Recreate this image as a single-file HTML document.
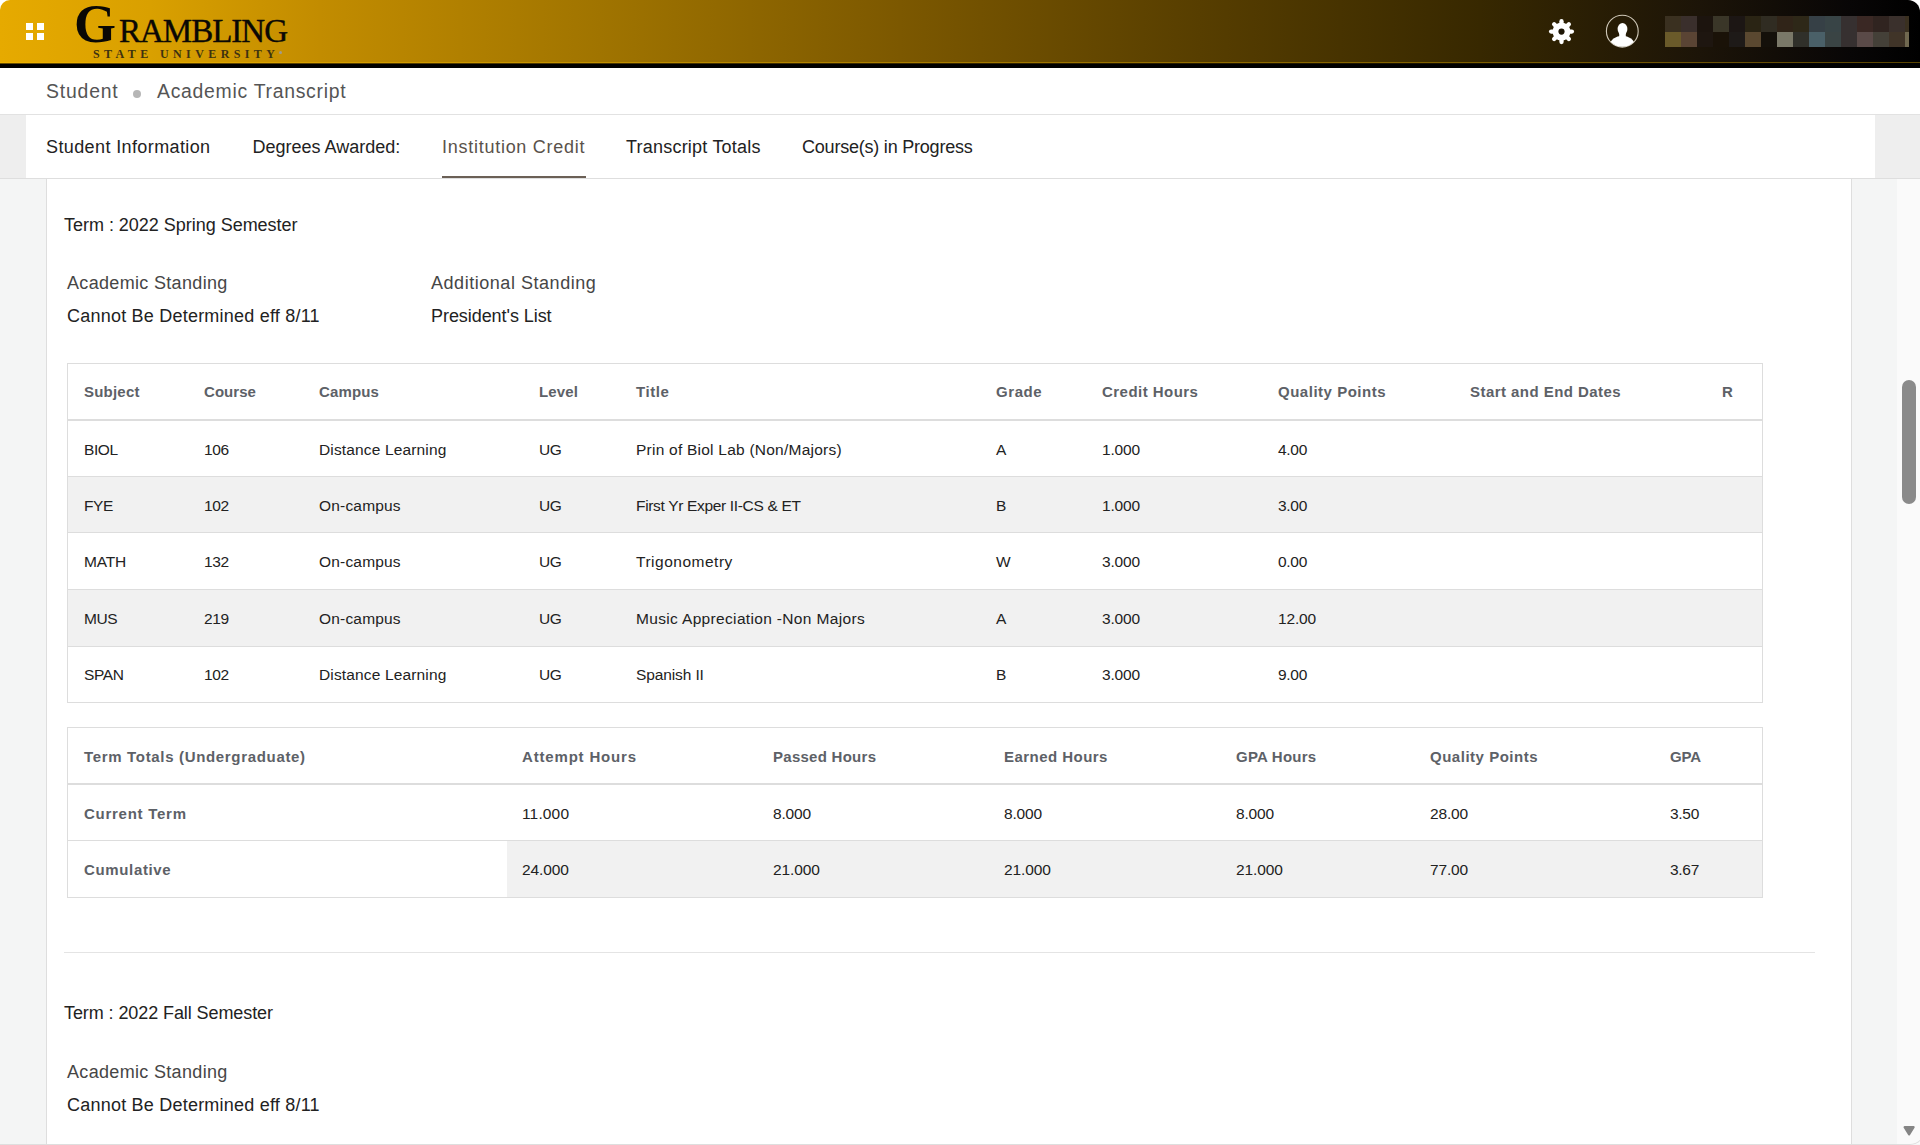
<!DOCTYPE html>
<html><head><meta charset="utf-8">
<style>
*{margin:0;padding:0;box-sizing:border-box}
html,body{width:1920px;height:1145px;overflow:hidden;background:#f4f5f5;font-family:"Liberation Sans",sans-serif}
.a{position:absolute}
.t{position:absolute;white-space:nowrap;line-height:1}
#hdr{left:0;top:0;width:1920px;height:68px;border-radius:10px 12px 0 0;overflow:hidden;
 background:linear-gradient(to right,#e6aa00 0px,#d9a000 150px,#c28c00 320px,#a07400 600px,#7c5800 900px,#573e00 1200px,#372800 1480px,#1c1408 1700px,#080606 1850px,#000 1920px)}
.hl{position:absolute;height:1px;background:#dddddd}
.vl{position:absolute;width:1px;background:#dddddd}
</style></head><body>
<div class="a" style="left:0;top:0;width:1920px;height:20px;background:#fff"></div>
<div id="hdr" class="a"></div>
<div class="a" style="left:0;top:62px;width:1920px;height:1px;background:rgba(255,196,0,0.35)"></div>
<div class="a" style="left:0;top:63px;width:1920px;height:1px;background:rgba(0,0,0,0.55)"></div>
<div class="a" style="left:0;top:64px;width:1920px;height:4px;background:#000"></div>
<div class="a" style="left:26px;top:23px;width:7px;height:7px;background:#fff"></div>
<div class="a" style="left:37px;top:23px;width:7px;height:7px;background:#fff"></div>
<div class="a" style="left:26px;top:33px;width:7px;height:7px;background:#fff"></div>
<div class="a" style="left:37px;top:33px;width:7px;height:7px;background:#fff"></div>
<div class="t" style="left:74px;top:-3px;font-family:'Liberation Serif',serif;font-weight:bold;font-size:54px;line-height:54px;color:#0a0805">G</div>
<div class="t" style="left:119px;top:15px;font-family:'Liberation Serif',serif;font-size:33px;line-height:33px;letter-spacing:-1px;-webkit-text-stroke:0.4px #0a0805;color:#0a0805">RAMBLING</div>
<div class="t" style="left:93px;top:48px;font-family:'Liberation Serif',serif;font-weight:bold;font-size:12px;line-height:12px;letter-spacing:4.4px;color:#3e3210">STATE UNIVERSITY</div>
<div class="a" style="left:278.5px;top:50.5px;width:3.2px;height:3.2px;border-radius:50%;background:#a09c8c"></div>
<svg class="a" style="left:1547px;top:17px" width="29" height="29" viewBox="-14.5 -14.5 29 29">
<g transform="translate(0,0.1)">
<circle r="9" fill="#fff"/>
<g stroke="#fff" stroke-width="4.3" stroke-linecap="round">
<line x1="0" y1="-6" x2="0" y2="-10.4" transform="rotate(0)"/>
<line x1="0" y1="-6" x2="0" y2="-10.4" transform="rotate(45)"/>
<line x1="0" y1="-6" x2="0" y2="-10.4" transform="rotate(90)"/>
<line x1="0" y1="-6" x2="0" y2="-10.4" transform="rotate(135)"/>
<line x1="0" y1="-6" x2="0" y2="-10.4" transform="rotate(180)"/>
<line x1="0" y1="-6" x2="0" y2="-10.4" transform="rotate(225)"/>
<line x1="0" y1="-6" x2="0" y2="-10.4" transform="rotate(270)"/>
<line x1="0" y1="-6" x2="0" y2="-10.4" transform="rotate(315)"/>
</g><circle r="3.1" fill="#1e1606"/></g></svg>
<svg class="a" style="left:1604px;top:13px" width="36" height="36" viewBox="0 0 36 36">
<defs><clipPath id="cc"><circle cx="18.3" cy="18.2" r="15.6"/></clipPath></defs>
<circle cx="18.3" cy="18.2" r="15.9" fill="none" stroke="#cfc8b8" stroke-width="1.1"/>
<g clip-path="url(#cc)" fill="#fff">
<ellipse cx="18.5" cy="16.1" rx="4.9" ry="6.2"/>
<rect x="15.2" y="20" width="6.6" height="4.5"/>
<ellipse cx="18.3" cy="32" rx="12.3" ry="9.2"/>
</g></svg>
<div class="a" style="left:1665px;top:16px;width:16px;height:16px;background:#3a3020"></div>
<div class="a" style="left:1665px;top:32px;width:16px;height:15px;background:#6a5a2a"></div>
<div class="a" style="left:1681px;top:16px;width:16px;height:16px;background:#3a2f2c"></div>
<div class="a" style="left:1681px;top:32px;width:16px;height:15px;background:#5a4434"></div>
<div class="a" style="left:1697px;top:16px;width:16px;height:16px;background:#1c140e"></div>
<div class="a" style="left:1697px;top:32px;width:16px;height:15px;background:#1e1610"></div>
<div class="a" style="left:1713px;top:16px;width:16px;height:16px;background:#3a3628"></div>
<div class="a" style="left:1713px;top:32px;width:16px;height:15px;background:#1a1208"></div>
<div class="a" style="left:1729px;top:16px;width:16px;height:16px;background:#1c1614"></div>
<div class="a" style="left:1729px;top:32px;width:16px;height:15px;background:#1e1a18"></div>
<div class="a" style="left:1745px;top:16px;width:16px;height:16px;background:#2a2414"></div>
<div class="a" style="left:1745px;top:32px;width:16px;height:15px;background:#5a4830"></div>
<div class="a" style="left:1761px;top:16px;width:16px;height:16px;background:#302c22"></div>
<div class="a" style="left:1761px;top:32px;width:16px;height:15px;background:#14100a"></div>
<div class="a" style="left:1777px;top:16px;width:16px;height:16px;background:#302418"></div>
<div class="a" style="left:1777px;top:32px;width:16px;height:15px;background:#7a7868"></div>
<div class="a" style="left:1793px;top:16px;width:16px;height:16px;background:#2e2818"></div>
<div class="a" style="left:1793px;top:32px;width:16px;height:15px;background:#30302a"></div>
<div class="a" style="left:1809px;top:16px;width:16px;height:16px;background:#364046"></div>
<div class="a" style="left:1809px;top:32px;width:16px;height:15px;background:#4a6068"></div>
<div class="a" style="left:1825px;top:16px;width:16px;height:16px;background:#384446"></div>
<div class="a" style="left:1825px;top:32px;width:16px;height:15px;background:#3a4444"></div>
<div class="a" style="left:1841px;top:16px;width:16px;height:16px;background:#363030"></div>
<div class="a" style="left:1841px;top:32px;width:16px;height:15px;background:#363030"></div>
<div class="a" style="left:1857px;top:16px;width:16px;height:16px;background:#3a2824"></div>
<div class="a" style="left:1857px;top:32px;width:16px;height:15px;background:#5a4a48"></div>
<div class="a" style="left:1873px;top:16px;width:16px;height:16px;background:#302420"></div>
<div class="a" style="left:1873px;top:32px;width:16px;height:15px;background:#444038"></div>
<div class="a" style="left:1889px;top:16px;width:16px;height:16px;background:#3a302c"></div>
<div class="a" style="left:1889px;top:32px;width:16px;height:15px;background:#403428"></div>
<div class="a" style="left:1905px;top:16px;width:4px;height:16px;background:#3a3020"></div>
<div class="a" style="left:1905px;top:32px;width:4px;height:15px;background:#706850"></div>
<div class="a" style="left:0;top:68px;width:1920px;height:46px;background:#fff"></div>
<div class="hl" style="left:0;top:114px;width:1920px;background:#e2e2e2"></div>
<div class="t" style="left:46px;top:82.08px;font-size:19.4px;color:#555;letter-spacing:0.815px;">Student</div>
<div class="a" style="left:133.2px;top:89.6px;width:8.3px;height:8.3px;border-radius:50%;background:#b6b6b6"></div>
<div class="t" style="left:157px;top:82.08px;font-size:19.4px;color:#555;letter-spacing:0.717px;">Academic Transcript</div>
<div class="a" style="left:0;top:115px;width:1920px;height:63px;background:#eeeeee"></div>
<div class="a" style="left:26px;top:115px;width:1849px;height:63px;background:#fff"></div>
<div class="hl" style="left:0;top:178px;width:1920px;background:#dedede"></div>
<div class="a" style="left:442px;top:176px;width:144px;height:2px;background:#6b6056"></div>
<div class="t" style="left:46px;top:138.26px;font-size:18px;color:#222;letter-spacing:0.39px;">Student Information</div>
<div class="t" style="left:252.5px;top:138.26px;font-size:18px;color:#222;letter-spacing:0.007px;">Degrees Awarded:</div>
<div class="t" style="left:442px;top:138.26px;font-size:18px;color:#5a524a;letter-spacing:0.734px;">Institution Credit</div>
<div class="t" style="left:626px;top:138.26px;font-size:18px;color:#222;letter-spacing:0.214px;">Transcript Totals</div>
<div class="t" style="left:802px;top:138.26px;font-size:18px;color:#222;letter-spacing:-0.214px;">Course(s) in Progress</div>
<div class="a" style="left:46px;top:179px;width:1806px;height:966px;background:#fff;border-left:1px solid #dedede;border-right:1px solid #dedede"></div>
<div class="hl" style="left:0;top:1144px;width:1906px;background:#dedede"></div>
<div class="a" style="left:1897px;top:179px;width:23px;height:965px;background:#fafafa"></div>
<div class="a" style="left:1902px;top:380px;width:14px;height:124px;background:#8a8a8a;border-radius:7px"></div>
<svg class="a" style="left:1902px;top:1125px" width="14" height="12" viewBox="0 0 14 12"><path d="M2.6 2.2 H11.6 L7.1 9.4 Z" fill="#858585" stroke="#858585" stroke-width="2.2" stroke-linejoin="round"/></svg>
<div class="a" style="left:1880px;top:1115px;width:45px;height:30px;border-bottom:1px solid #dddddd;border-right:1px solid #dddddd;border-bottom-right-radius:15px"></div>
<div class="t" style="left:64px;top:215.76px;font-size:18px;color:#222;letter-spacing:-0.022px;">Term : 2022 Spring Semester</div>
<div class="t" style="left:67px;top:274.26px;font-size:18px;color:#464646;letter-spacing:0.326px;">Academic Standing</div>
<div class="t" style="left:67px;top:307.36px;font-size:18px;color:#222;letter-spacing:0.219px;">Cannot Be Determined eff 8/11</div>
<div class="t" style="left:431px;top:274.26px;font-size:18px;color:#464646;letter-spacing:0.538px;">Additional Standing</div>
<div class="t" style="left:431px;top:307.36px;font-size:18px;color:#222;letter-spacing:-0.059px;">President's List</div>
<div class="a" style="left:67px;top:363px;width:1696px;height:340px;border:1px solid #dddddd;background:#fff"></div>
<div class="a" style="left:68px;top:477px;width:1694px;height:55px;background:#f1f1f1"></div>
<div class="a" style="left:68px;top:590px;width:1694px;height:56px;background:#f1f1f1"></div>
<div class="hl" style="left:67px;top:419px;width:1696px;height:2px;background:#dddddd"></div>
<div class="hl" style="left:67px;top:476px;width:1696px;background:#dddddd"></div>
<div class="hl" style="left:67px;top:532px;width:1696px;background:#dddddd"></div>
<div class="hl" style="left:67px;top:589px;width:1696px;background:#dddddd"></div>
<div class="hl" style="left:67px;top:646px;width:1696px;background:#dddddd"></div>
<div class="t" style="left:84px;top:384.30px;font-size:15px;color:#5d6167;font-weight:bold;letter-spacing:0.208px;">Subject</div>
<div class="t" style="left:204px;top:384.30px;font-size:15px;color:#5d6167;font-weight:bold;letter-spacing:0.05px;">Course</div>
<div class="t" style="left:319px;top:384.30px;font-size:15px;color:#5d6167;font-weight:bold;letter-spacing:0.15px;">Campus</div>
<div class="t" style="left:539px;top:384.30px;font-size:15px;color:#5d6167;font-weight:bold;letter-spacing:0.15px;">Level</div>
<div class="t" style="left:636px;top:384.30px;font-size:15px;color:#5d6167;font-weight:bold;letter-spacing:0.6px;">Title</div>
<div class="t" style="left:996px;top:384.30px;font-size:15px;color:#5d6167;font-weight:bold;letter-spacing:0.562px;">Grade</div>
<div class="t" style="left:1102px;top:384.30px;font-size:15px;color:#5d6167;font-weight:bold;letter-spacing:0.464px;">Credit Hours</div>
<div class="t" style="left:1278px;top:384.30px;font-size:15px;color:#5d6167;font-weight:bold;letter-spacing:0.515px;">Quality Points</div>
<div class="t" style="left:1470px;top:384.30px;font-size:15px;color:#5d6167;font-weight:bold;letter-spacing:0.45px;">Start and End Dates</div>
<div class="t" style="left:1722px;top:384.30px;font-size:15px;color:#5d6167;font-weight:bold;">R</div>
<div class="t" style="left:84px;top:441.58px;font-size:15.5px;color:#222;letter-spacing:-0.4px;">BIOL</div>
<div class="t" style="left:204px;top:441.58px;font-size:15.5px;color:#222;letter-spacing:-0.345px;">106</div>
<div class="t" style="left:319px;top:441.58px;font-size:15.5px;color:#222;letter-spacing:0.146px;">Distance Learning</div>
<div class="t" style="left:539px;top:441.58px;font-size:15.5px;color:#222;letter-spacing:-0.4px;">UG</div>
<div class="t" style="left:636px;top:441.58px;font-size:15.5px;color:#222;letter-spacing:0.236px;">Prin of Biol Lab (Non/Majors)</div>
<div class="t" style="left:996px;top:441.58px;font-size:15.5px;color:#222;">A</div>
<div class="t" style="left:1102px;top:441.58px;font-size:15.5px;color:#222;letter-spacing:-0.155px;">1.000</div>
<div class="t" style="left:1278px;top:441.58px;font-size:15.5px;color:#222;letter-spacing:-0.301px;">4.00</div>
<div class="t" style="left:84px;top:497.98px;font-size:15.5px;color:#222;letter-spacing:-0.4px;">FYE</div>
<div class="t" style="left:204px;top:497.98px;font-size:15.5px;color:#222;letter-spacing:-0.345px;">102</div>
<div class="t" style="left:319px;top:497.98px;font-size:15.5px;color:#222;letter-spacing:0.184px;">On-campus</div>
<div class="t" style="left:539px;top:497.98px;font-size:15.5px;color:#222;letter-spacing:-0.4px;">UG</div>
<div class="t" style="left:636px;top:497.98px;font-size:15.5px;color:#222;letter-spacing:-0.329px;">First Yr Exper II-CS &amp; ET</div>
<div class="t" style="left:996px;top:497.98px;font-size:15.5px;color:#222;">B</div>
<div class="t" style="left:1102px;top:497.98px;font-size:15.5px;color:#222;letter-spacing:-0.155px;">1.000</div>
<div class="t" style="left:1278px;top:497.98px;font-size:15.5px;color:#222;letter-spacing:-0.301px;">3.00</div>
<div class="t" style="left:84px;top:554.38px;font-size:15.5px;color:#222;letter-spacing:-0.159px;">MATH</div>
<div class="t" style="left:204px;top:554.38px;font-size:15.5px;color:#222;letter-spacing:-0.345px;">132</div>
<div class="t" style="left:319px;top:554.38px;font-size:15.5px;color:#222;letter-spacing:0.184px;">On-campus</div>
<div class="t" style="left:539px;top:554.38px;font-size:15.5px;color:#222;letter-spacing:-0.4px;">UG</div>
<div class="t" style="left:636px;top:554.38px;font-size:15.5px;color:#222;letter-spacing:0.51px;">Trigonometry</div>
<div class="t" style="left:996px;top:554.38px;font-size:15.5px;color:#222;">W</div>
<div class="t" style="left:1102px;top:554.38px;font-size:15.5px;color:#222;letter-spacing:-0.155px;">3.000</div>
<div class="t" style="left:1278px;top:554.38px;font-size:15.5px;color:#222;letter-spacing:-0.301px;">0.00</div>
<div class="t" style="left:84px;top:610.78px;font-size:15.5px;color:#222;letter-spacing:-0.4px;">MUS</div>
<div class="t" style="left:204px;top:610.78px;font-size:15.5px;color:#222;letter-spacing:-0.345px;">219</div>
<div class="t" style="left:319px;top:610.78px;font-size:15.5px;color:#222;letter-spacing:0.184px;">On-campus</div>
<div class="t" style="left:539px;top:610.78px;font-size:15.5px;color:#222;letter-spacing:-0.4px;">UG</div>
<div class="t" style="left:636px;top:610.78px;font-size:15.5px;color:#222;letter-spacing:0.339px;">Music Appreciation -Non Majors</div>
<div class="t" style="left:996px;top:610.78px;font-size:15.5px;color:#222;">A</div>
<div class="t" style="left:1102px;top:610.78px;font-size:15.5px;color:#222;letter-spacing:-0.155px;">3.000</div>
<div class="t" style="left:1278px;top:610.78px;font-size:15.5px;color:#222;letter-spacing:-0.155px;">12.00</div>
<div class="t" style="left:84px;top:667.18px;font-size:15.5px;color:#222;letter-spacing:-0.4px;">SPAN</div>
<div class="t" style="left:204px;top:667.18px;font-size:15.5px;color:#222;letter-spacing:-0.345px;">102</div>
<div class="t" style="left:319px;top:667.18px;font-size:15.5px;color:#222;letter-spacing:0.146px;">Distance Learning</div>
<div class="t" style="left:539px;top:667.18px;font-size:15.5px;color:#222;letter-spacing:-0.4px;">UG</div>
<div class="t" style="left:636px;top:667.18px;font-size:15.5px;color:#222;letter-spacing:-0.114px;">Spanish II</div>
<div class="t" style="left:996px;top:667.18px;font-size:15.5px;color:#222;">B</div>
<div class="t" style="left:1102px;top:667.18px;font-size:15.5px;color:#222;letter-spacing:-0.155px;">3.000</div>
<div class="t" style="left:1278px;top:667.18px;font-size:15.5px;color:#222;letter-spacing:-0.301px;">9.00</div>
<div class="a" style="left:67px;top:727px;width:1696px;height:171px;border:1px solid #dddddd;background:#fff"></div>
<div class="a" style="left:507px;top:841px;width:1255px;height:56px;background:#f1f1f1"></div>
<div class="hl" style="left:67px;top:783px;width:1696px;height:2px;background:#dddddd"></div>
<div class="hl" style="left:67px;top:840px;width:1696px;background:#dddddd"></div>
<div class="t" style="left:84px;top:748.80px;font-size:15px;color:#5d6167;font-weight:bold;letter-spacing:0.671px;">Term Totals (Undergraduate)</div>
<div class="t" style="left:522px;top:748.80px;font-size:15px;color:#5d6167;font-weight:bold;letter-spacing:0.825px;">Attempt Hours</div>
<div class="t" style="left:773px;top:748.80px;font-size:15px;color:#5d6167;font-weight:bold;letter-spacing:0.268px;">Passed Hours</div>
<div class="t" style="left:1004px;top:748.80px;font-size:15px;color:#5d6167;font-weight:bold;letter-spacing:0.464px;">Earned Hours</div>
<div class="t" style="left:1236px;top:748.80px;font-size:15px;color:#5d6167;font-weight:bold;letter-spacing:0.213px;">GPA Hours</div>
<div class="t" style="left:1430px;top:748.80px;font-size:15px;color:#5d6167;font-weight:bold;letter-spacing:0.515px;">Quality Points</div>
<div class="t" style="left:1670px;top:748.80px;font-size:15px;color:#5d6167;font-weight:bold;letter-spacing:-0.175px;">GPA</div>
<div class="t" style="left:84px;top:806.20px;font-size:15px;color:#5d6167;font-weight:bold;letter-spacing:0.736px;">Current Term</div>
<div class="t" style="left:522px;top:805.78px;font-size:15.5px;color:#222;letter-spacing:0.15px;">11.000</div>
<div class="t" style="left:773px;top:805.78px;font-size:15.5px;color:#222;letter-spacing:-0.155px;">8.000</div>
<div class="t" style="left:1004px;top:805.78px;font-size:15.5px;color:#222;letter-spacing:-0.155px;">8.000</div>
<div class="t" style="left:1236px;top:805.78px;font-size:15.5px;color:#222;letter-spacing:-0.155px;">8.000</div>
<div class="t" style="left:1430px;top:805.78px;font-size:15.5px;color:#222;letter-spacing:-0.155px;">28.00</div>
<div class="t" style="left:1670px;top:805.78px;font-size:15.5px;color:#222;letter-spacing:-0.301px;">3.50</div>
<div class="t" style="left:84px;top:862.20px;font-size:15px;color:#5d6167;font-weight:bold;letter-spacing:0.65px;">Cumulative</div>
<div class="t" style="left:522px;top:861.78px;font-size:15.5px;color:#222;letter-spacing:-0.098px;">24.000</div>
<div class="t" style="left:773px;top:861.78px;font-size:15.5px;color:#222;letter-spacing:-0.098px;">21.000</div>
<div class="t" style="left:1004px;top:861.78px;font-size:15.5px;color:#222;letter-spacing:-0.098px;">21.000</div>
<div class="t" style="left:1236px;top:861.78px;font-size:15.5px;color:#222;letter-spacing:-0.098px;">21.000</div>
<div class="t" style="left:1430px;top:861.78px;font-size:15.5px;color:#222;letter-spacing:-0.155px;">77.00</div>
<div class="t" style="left:1670px;top:861.78px;font-size:15.5px;color:#222;letter-spacing:-0.301px;">3.67</div>
<div class="hl" style="left:64px;top:952px;width:1751px;background:#e4e4e4"></div>
<div class="t" style="left:64px;top:1003.76px;font-size:18px;color:#222;letter-spacing:-0.088px;">Term : 2022 Fall Semester</div>
<div class="t" style="left:67px;top:1062.76px;font-size:18px;color:#464646;letter-spacing:0.326px;">Academic Standing</div>
<div class="t" style="left:67px;top:1095.76px;font-size:18px;color:#222;letter-spacing:0.219px;">Cannot Be Determined eff 8/11</div>
</body></html>
